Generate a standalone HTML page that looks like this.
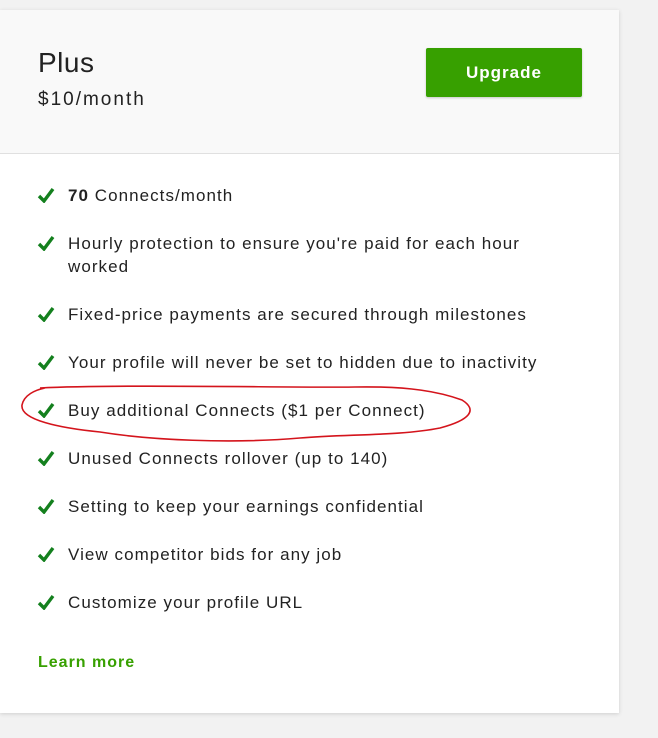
<!DOCTYPE html>
<html><head><style>
body{margin:0;width:658px;height:738px;background:#f2f2f2;font-family:"Liberation Sans",sans-serif;position:relative;overflow:hidden}
.card{position:absolute;left:0;top:10px;width:619px;height:703px;background:#fff;box-shadow:0 1px 4px rgba(0,0,0,.15)}
.hd{height:143px;background:#f9f9f9;border-bottom:1px solid #e0e0e0;position:relative}
.t{position:absolute;left:38px;top:37px;font-size:28px;color:#222;letter-spacing:.5px}
.p{position:absolute;left:38px;top:79px;font-size:19px;color:#222;letter-spacing:2px}
.btn{position:absolute;left:426px;top:38px;width:156px;height:49px;background:#37a000;border-radius:2px;color:#fff;font-weight:bold;font-size:17px;letter-spacing:1px;text-align:center;line-height:49px;box-shadow:0 1px 2px rgba(0,0,0,.2)}
.it{position:absolute;left:68px;font-size:17px;color:#222;line-height:23px;width:480px;letter-spacing:1.05px}
.ck{position:absolute;left:-31px;top:3px}
.lm{position:absolute;left:38px;color:#37a000;font-weight:bold;font-size:16px;letter-spacing:1px}
</style></head><body>
<div class="card">
<div class="hd"><div class="t">Plus</div><div class="p">$10/month</div><div class="btn">Upgrade</div></div>
</div>
<svg width="0" height="0" style="position:absolute"><defs><symbol id="c" viewBox="0 0 18 16"><path d="M2 9 L7 14 L16 2" fill="none" stroke="#14801e" stroke-width="3.4"/></symbol></defs></svg>
<div class="it" style="top:184px"><svg class="ck" width="18" height="16"><use href="#c"/></svg><b>70</b> Connects/month</div>
<div class="it" style="top:232px"><svg class="ck" width="18" height="16"><use href="#c"/></svg>Hourly protection to ensure you're paid for each hour worked</div>
<div class="it" style="top:303px"><svg class="ck" width="18" height="16"><use href="#c"/></svg>Fixed-price payments are secured through milestones</div>
<div class="it" style="top:351px"><svg class="ck" width="18" height="16"><use href="#c"/></svg>Your profile will never be set to hidden due to inactivity</div>
<div class="it" style="top:399px"><svg class="ck" width="18" height="16"><use href="#c"/></svg>Buy additional Connects ($1 per Connect)</div>
<div class="it" style="top:447px"><svg class="ck" width="18" height="16"><use href="#c"/></svg>Unused Connects rollover (up to 140)</div>
<div class="it" style="top:495px"><svg class="ck" width="18" height="16"><use href="#c"/></svg>Setting to keep your earnings confidential</div>
<div class="it" style="top:543px"><svg class="ck" width="18" height="16"><use href="#c"/></svg>View competitor bids for any job</div>
<div class="it" style="top:591px"><svg class="ck" width="18" height="16"><use href="#c"/></svg>Customize your profile URL</div>
<div class="lm" style="top:654px">Learn more</div>
<svg style="position:absolute;left:0;top:0" width="658" height="738"><path d="M40 388 C120 384 300 388 355 387 C410 386 440 392 462 400 C478 410 470 420 440 428 C400 436 345 434 300 438 C230 444 150 440 100 432 C60 428 20 420 22 405 C24 395 35 390 45 388" fill="none" stroke="#d4141c" stroke-width="1.6"/></svg>
</body></html>
